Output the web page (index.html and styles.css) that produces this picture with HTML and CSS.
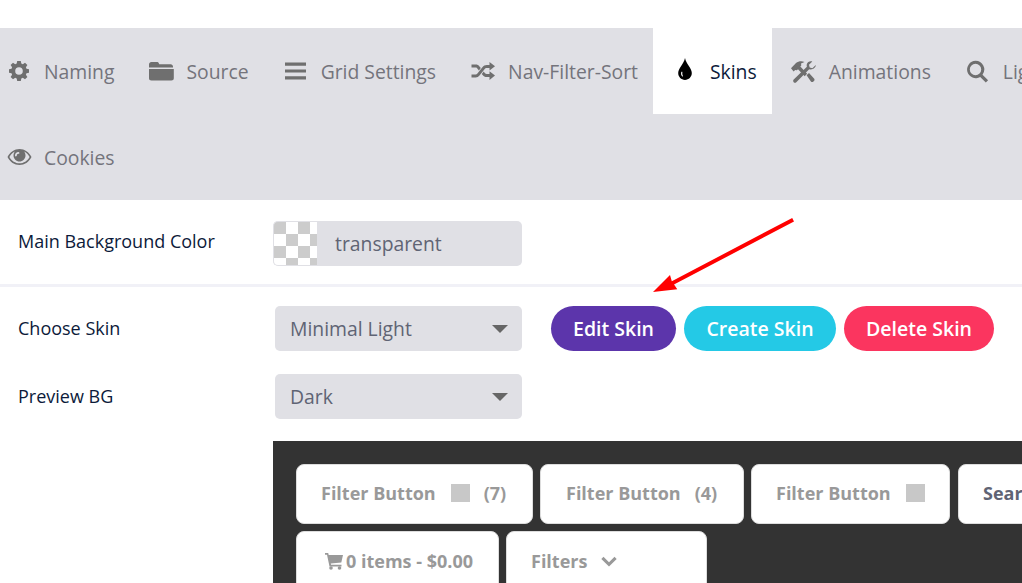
FILE: index.html
```html
<!DOCTYPE html>
<html lang="en">
<head>
    <meta charset="UTF-8">
    <meta name="viewport" content="width=device-width, initial-scale=1.0">
    <title>Skins</title>
    <link rel="stylesheet" href="styles.css">
</head>
<body>
    <div class="tabs">
        <div class="tab">
            <span class="tab-icon"><svg width="20" height="20" viewBox="0 0 20 20"><path fill-rule="evenodd" d="M8.200 0h3.600l.5 2.600 1.500.6 2.200-1.500 2.400 2.400-1.500 2.200.6 1.500 2.500.5v3.400l-2.500.5-.6 1.500 1.500 2.200-2.400 2.400-2.200-1.500-1.500.6-.5 2.600H8.200l-.5-2.600-1.500-.6L4 18.300l-2.400-2.400 1.500-2.200-.6-1.500L0 11.700V8.300l2.500-.5.6-1.500L1.600 4.100 4 1.700l2.200 1.500 1.500-.6zM10 6.200a3.800 3.800 0 1 0 0 7.600 3.800 3.800 0 0 0 0-7.600z"/></svg></span>
            <span>Naming</span>
        </div>
        <div class="tab">
            <span class="tab-icon"><svg width="26" height="20" viewBox="0 0 26 20"><path d="M1 3.500C1 2.100 2 1 3.400 1h5.400c1 0 1.700.5 2.100 1.400l.4.9h11.300c1.400 0 2.400 1 2.400 2.300v.9H1zM1 8h24.800v9.200c0 1.300-1 2.300-2.400 2.300H3.400c-1.400 0-2.400-1-2.400-2.300z"/></svg></span>
            <span>Source</span>
        </div>
        <div class="tab">
            <span class="tab-icon"><svg width="22" height="20" viewBox="0 0 22 20"><path d="M0 1.500h21v3.200H0zM0 8.400h21v3.200H0zM0 15.300h21v3.200H0z"/></svg></span>
            <span>Grid Settings</span>
        </div>
        <div class="tab">
            <span class="tab-icon"><svg width="24" height="20" viewBox="0 0 24 20"><path d="M18.500 1 24 5.300l-5.500 4.300V7h-2.700c-1 0-1.700.5-2.300 1.300l-5 6.300c-1 1.300-2.300 1.900-3.800 1.900H.5v-3h4.200c.7 0 1.200-.3 1.700-.9l5-6.300C12.500 4.900 14 4 15.800 4h2.700zM.5 3.500h4.200c1.500 0 2.800.6 3.800 1.900l1.300 1.700-1.900 2.400-1.800-2.300c-.4-.6-1-.7-1.600-.7H.5zM18.500 10.300l5.500 4.300-5.500 4.300V16h-2.700c-1.800 0-3.300-.8-4.400-2.300l-.6-.8 1.900-2.400 1.100 1.400c.6.800 1.300 1.100 2 1.100h2.700z"/></svg></span>
            <span>Nav-Filter-Sort</span>
        </div>
        <div class="tab active">
            <span class="tab-icon"><svg width="14" height="22" viewBox="0 0 14 22"><path fill-rule="evenodd" d="M7 0c.6 3.200 2.300 5.600 4 8.200 1.300 2 2.800 4.300 2.800 6.900 0 3.800-3 6.900-6.800 6.900S.2 18.900.2 15.100c0-2.600 1.500-4.900 2.800-6.900C4.700 5.600 6.400 3.200 7 0zM3.300 14c-.5 1.700-.2 3.500 1 4.500.4.300.9 0 .7-.4-.8-1.300-.8-2.700-.6-4-.1-.6-.9-.6-1.100-.1z"/></svg></span>
            <span>Skins</span>
        </div>
        <div class="tab">
            <span class="tab-icon"><svg width="25" height="23" viewBox="0 0 25 23"><path d="M0 8.200 5 3.100C7.400 1 10.800.6 13.500 2L10 3.600l.3 2L9.300 6.500l1.200 1.300 5.600 6-2.400 2.400-6.700-7-1.100 1-1.700-.2-1.600 1.600z"/><path d="M15.600 15.300 18 13l5 5.400c.7.700.7 1.800 0 2.500l-.6.600c-.7.700-1.800.7-2.500 0z"/><path d="M24.800 5.100 21.400 8.300l-2.700-.8-.7-2.700 3.300-3.300C18.800.8 16.400 2.100 15.800 4.300c-.2.900-.2 1.700.1 2.500L2.700 19.600c-.7.700-.7 1.900 0 2.600.7.700 1.900.7 2.600 0L18.200 9.300c2.400.7 5-.6 6.300-2.800.2-.5.300-.9.300-1.400z"/></svg></span>
            <span>Animations</span>
        </div>
        <div class="tab">
            <span class="tab-icon"><svg width="23" height="23" viewBox="0 0 23 23"><path fill-rule="evenodd" d="M9.500.8a8.700 8.700 0 0 1 7 13.900l5.600 5.600-2.300 2.300-5.600-5.600A8.700 8.700 0 1 1 9.500.8zm0 3a5.700 5.700 0 1 0 0 11.400 5.700 5.700 0 0 0 0-11.400z"/></svg></span>
            <span>Lightbox</span>
        </div>
        <div class="tab">
            <span class="tab-icon"><svg width="25" height="18" viewBox="0 0 25 18"><path fill-rule="evenodd" d="M12.500 1c5 0 9.500 3 12 8-2.500 5-7 8-12 8S3 14 .5 9C3 4 7.500 1 12.500 1zM7.800 3.500C5.600 4.600 3.700 6.500 2.400 9c2.300 4 6 6.300 10.100 6.300S20.300 13 22.600 9c-1.300-2.500-3.200-4.400-5.400-5.500.9 1.200 1.300 2.500 1.300 4 0 3.300-2.700 6-6 6s-6-2.700-6-6c0-1.500.4-2.800 1.300-4zM11.500 4C9.500 4 8 5.500 8 7.500c0 .5.400.9.900.9s.9-.4.900-.9c0-1 .7-1.700 1.700-1.700.5 0 .9-.4.900-.9S12 4 11.500 4z"/></svg></span>
            <span>Cookies</span>
        </div>
    </div>

    <div class="setting-row bg-row">
        <div class="setting-label">Main Background Color</div>
        <div class="color-field">
            <span class="checker"></span>
            <span class="color-value">transparent</span>
        </div>
    </div>

    <div class="skin-settings">
        <div class="setting-row">
            <div class="setting-label">Choose Skin</div>
            <div class="select-box">Minimal Light</div>
            <div class="skin-buttons">
                <button class="pill pill-edit">Edit Skin</button>
                <button class="pill pill-create">Create Skin</button>
                <button class="pill pill-delete">Delete Skin</button>
            </div>
        </div>
        <div class="setting-row">
            <div class="setting-label">Preview BG</div>
            <div class="select-box">Dark</div>
        </div>
    </div>

    <div class="preview">
        <div class="filter-btn btn-a"><span>Filter Button</span><span class="swatch"></span><span class="count">(7)</span></div>
        <div class="filter-btn btn-b"><span>Filter Button</span><span class="count">(4)</span></div>
        <div class="filter-btn btn-c"><span>Filter Button</span><span class="swatch"></span></div>
        <div class="filter-btn btn-search"><span>Search</span></div>
        <div class="filter-btn btn-cart">
            <svg width="18" height="18" viewBox="0 0 18 18"><path d="M0 1h3.200l.5 2H18l-1.700 7.500-10.500 1 .3 1.300h10.400v1.700H4.500L2 2.700H0z"/><circle cx="6" cy="16" r="1.800"/><circle cx="14.500" cy="16" r="1.800"/></svg>
            <span>0 items - $0.00</span>
        </div>
        <div class="filter-btn btn-filters">
            <span>Filters</span>
            <svg class="chevron" width="16" height="11" viewBox="0 0 16 11"><path d="M2.500.8 8 6.200 13.500.8l2.200 2.200L8 10.500.3 3z"/></svg>
        </div>
    </div>

    <svg class="arrow" width="150" height="84" viewBox="0 0 150 84"><path fill="#f00" d="M139.200 0 141 3.500 21 66.500 24.300 71.300 0 74 17 57 18.800 63.200z"/></svg>
</body>
</html>
```

FILE: styles.css
```css
* {
    margin: 0;
    padding: 0;
    box-sizing: border-box;
    font-family: 'Open Sans', sans-serif;
}

html, body {
    height: 583px;
    overflow: hidden;
}

body {
    position: relative;
    padding-top: 28px;
    background-color: #ffffff;
    color: #0c1a3a;
}

/* Tabs */
.tabs {
    display: flex;
    flex-wrap: wrap;
    width: 1123px;
    margin-left: -13px;
    background-color: #e0e0e5;
}

.tab {
    display: flex;
    align-items: center;
    height: 86px;
    padding-right: 15px;
    font-size: 19.35px;
    color: #74747c;
}

.tab-icon {
    display: flex;
    justify-content: center;
    align-items: center;
    width: 57px;
    padding-left: 7px;
}

.tab-icon svg {
    fill: #6f6f6f;
}

.tab.active {
    background-color: #ffffff;
    color: #0c1a3a;
}

.tab.active .tab-icon svg {
    margin-bottom: 4px;
    fill: #000000;
}

/* Settings */
.setting-row {
    display: flex;
    align-items: center;
    padding-left: 18px;
}

.setting-label {
    width: 257px;
    padding-bottom: 2px;
    font-size: 18px;
    color: #0c1a3a;
}

.bg-row {
    padding-top: 21px;
    padding-bottom: 18px;
    border-bottom: 3px solid #f1f1f7;
}

.bg-row .setting-label {
    width: 255px;
    padding-bottom: 5px;
}

.color-field {
    display: flex;
    align-items: center;
    width: 249px;
    height: 45px;
    border-radius: 5px;
    background-color: #e0e0e5;
    overflow: hidden;
}

.checker {
    width: 44px;
    height: 45px;
    border: 1px solid #e0e0e5;
    border-right: none;
    border-radius: 5px 0 0 5px;
    background-color: #ffffff;
    background-image: conic-gradient(#ffffff 25%, #cccccc 0 50%, #ffffff 0 75%, #cccccc 0);
    background-size: 24px 24px;
}

.color-value {
    margin-left: 18px;
    font-size: 19.35px;
    color: #5f6474;
}

.skin-settings {
    display: flex;
    flex-direction: column;
    gap: 23px;
    padding-top: 19px;
}

.select-box {
    position: relative;
    width: 247px;
    height: 45px;
    padding-left: 15px;
    border-radius: 5px;
    background-color: #e0e0e5;
    font-size: 19.35px;
    line-height: 45px;
    color: #5f6474;
}

.select-box::after {
    content: "";
    position: absolute;
    top: 19px;
    right: 14px;
    border-top: 8px solid #666666;
    border-left: 8px solid transparent;
    border-right: 8px solid transparent;
}

.skin-buttons {
    display: flex;
    gap: 8px;
    margin-left: 29px;
}

.pill {
    height: 45px;
    border: none;
    border-radius: 23px;
    color: #ffffff;
    font-size: 19.5px;
    font-weight: 600;
}

.pill-edit {
    width: 125px;
    background-color: #5c35ab;
}

.pill-create {
    width: 152px;
    background-color: #24c9e6;
}

.pill-delete {
    width: 150px;
    background-color: #fb355f;
}

/* Skin preview */
.preview {
    display: flex;
    flex-wrap: wrap;
    align-content: flex-start;
    gap: 7px;
    width: 920px;
    height: 200px;
    margin-top: 22px;
    margin-left: 273px;
    padding: 23px;
    background-color: #333333;
}

.filter-btn {
    display: flex;
    align-items: center;
    height: 60px;
    padding-left: 24px;
    padding-bottom: 2px;
    border: 1px solid #dddddd;
    border-radius: 8px;
    background-color: #ffffff;
    font-size: 18px;
    font-weight: 700;
    color: #999999;
    white-space: nowrap;
}

.btn-a { width: 237px; }
.btn-b { width: 204px; padding-left: 25px; }
.btn-c { width: 199px; padding-left: 24px; }
.btn-cart { width: 203px; padding-left: 28px; padding-bottom: 0; }
.btn-filters { width: 201px; padding-left: 24px; padding-bottom: 0; }

.btn-search {
    width: 200px;
    margin-left: 1px;
    color: #5f6474;
}

.btn-cart svg,
.chevron {
    fill: #999999;
}

.btn-cart svg {
    margin-right: 3px;
}

.chevron {
    margin-left: 14px;
}

.swatch {
    width: 19px;
    height: 18px;
    margin-left: 15px;
    background-color: #c8c8c8;
}

.count {
    margin-left: 14px;
}

/* Annotation over the page */
.arrow {
    position: absolute;
    top: 218px;
    left: 653px;
}
```
